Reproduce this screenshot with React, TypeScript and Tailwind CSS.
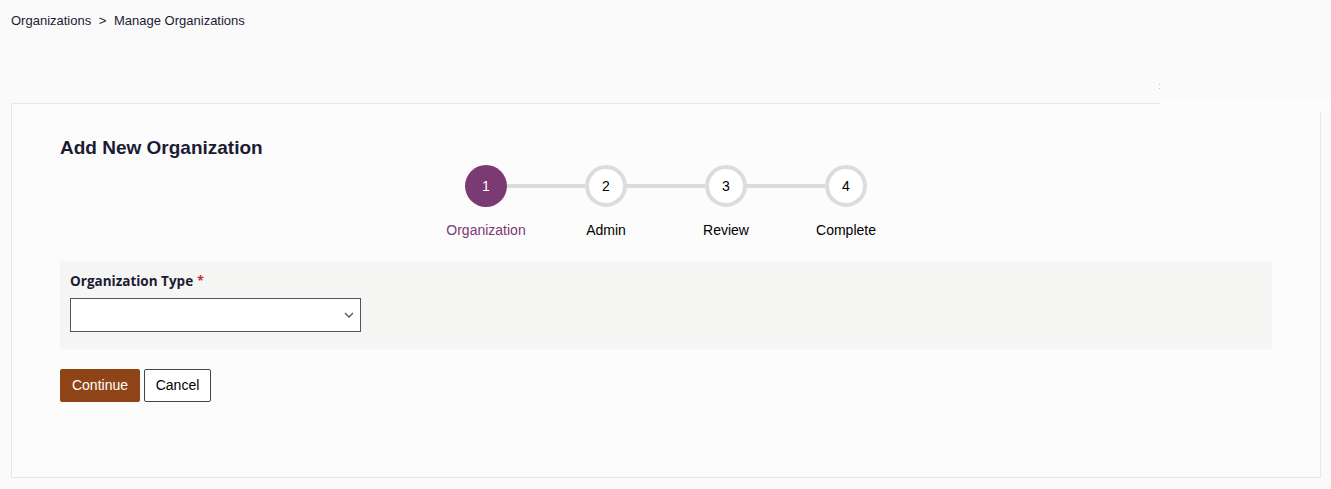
import React from "react";

const steps = ["Organization", "Admin", "Review", "Complete"];

export default function App() {
  return (
    <div className="relative min-h-[489px] w-[1331px] bg-[#fafafa] font-['Liberation_Sans',Arial,sans-serif] text-[#1d1b33]">
      <div className="px-[11px] pt-[13px] text-[13px] leading-[16px]">
        Organizations <span className="mx-[4px]">&gt;</span> Manage Organizations
      </div>

      <div className="ml-[11px] mt-[74px] h-[375px] w-[1310px] border border-[#e6e6e6] bg-[#fcfcfc] pl-[48px] pr-[48px] pt-[31px]">
        <h2 className="h-[24px] overflow-visible text-[19px] font-bold leading-[26px] text-[#1d1b33]">Add New Organization</h2>

        <div className="mt-[6px] flex justify-center">
          {steps.map((s, i) => (
            <React.Fragment key={s}>
              {i > 0 && <div className="mt-[19px] h-[4px] w-[78px] bg-[#dcdcdc]" />}
              {i === 0 ? (
                <div className="flex h-[42px] w-[42px] items-center justify-center rounded-full bg-[#7b3a72] text-[14px] text-white">
                  1
                </div>
              ) : (
                <div className="flex h-[42px] w-[42px] items-center justify-center rounded-full border-[4px] border-[#dcdcdc] bg-white text-[14px] text-black">
                  {i + 1}
                </div>
              )}
            </React.Fragment>
          ))}
        </div>
        <div className="mt-[15px] flex justify-center">
          {steps.map((s, i) => (
            <div
              key={s}
              className={`w-[120px] text-center text-[14px] leading-[16px] ${i === 0 ? "text-[#7b3a72]" : "text-black"}`}
            >
              {s}
            </div>
          ))}
        </div>

        <div className="mt-[23px] bg-[#f5f5f4] px-[10px] pb-[17px] pt-[10px]">
          <div className="mb-[7px] flex h-[20px] items-center text-[13.5px] font-bold leading-[20px] text-[#1d1b33] font-['Open_Sans',sans-serif]">
            Organization Type<span className="ml-[4px] text-[12px] leading-[20px] text-[#c0283a]">*</span>
          </div>
          <div className="relative flex h-[34px] w-[291px] items-center justify-end border border-[#555] bg-white pr-[6px]">
            <svg width="10" height="6" viewBox="0 0 10 6" fill="none">
              <path d="M1 1l4 4 4-4" stroke="#555" strokeWidth="1.3" />
            </svg>
          </div>
        </div>

        <div className="mt-[20px] flex gap-[4px]">
          <button className="h-[33px] w-[80px] rounded-[2px] bg-[#8f4417] text-[14px] text-white">Continue</button>
          <button className="h-[33px] w-[67px] rounded-[2px] border border-[#444] bg-white text-[14px] text-black">Cancel</button>
        </div>
      </div>

      <div className="absolute left-[1160px] top-[100px] h-[12px] w-[171px] bg-[#fcfcfc]" />
      <div className="absolute left-[1159px] top-[84px] h-[1px] w-[1px] bg-[#e8c070]" />
      <div className="absolute left-[1159px] top-[88px] h-[1px] w-[1px] bg-[#e8c070]" />
    </div>
  );
}
